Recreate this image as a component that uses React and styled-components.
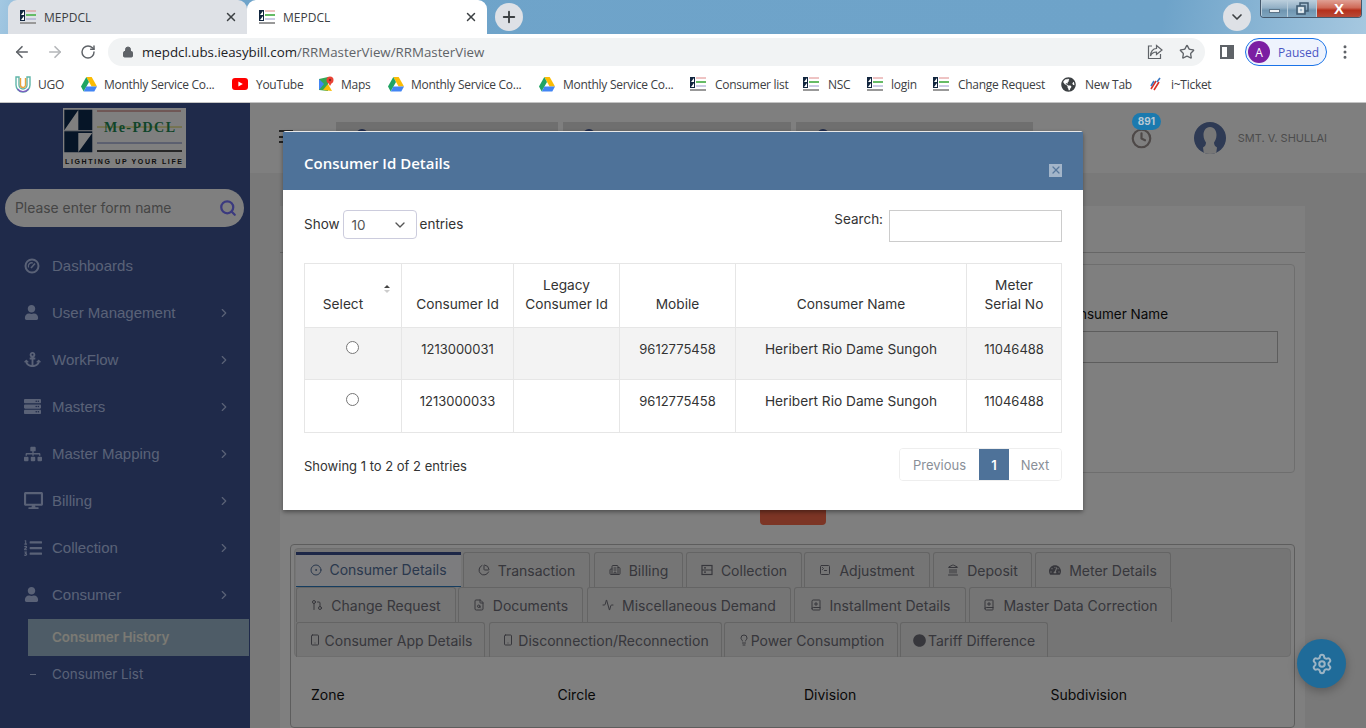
import styled, { createGlobalStyle } from "styled-components";
import {
  ArrowLeft, ArrowRight, RotateCw, Lock, Star, X, Plus, ChevronDown, ChevronRight, MoreVertical, Search as SearchIcon,
  CircleDot, ChartPie, Building2, SquareTerminal, Landmark, GitPullRequest, FileSearch, Activity, BookPlus,
  Smartphone, Lightbulb, Settings, Clock,
} from "lucide-react";
import { FaUser, FaAnchor, FaServer, FaSitemap, FaDesktop, FaListOl, FaGlobeAmericas, FaTachometerAlt, FaCircle } from "react-icons/fa";

const poppins = `Inter, "Noto Sans", sans-serif`;
const segoe = `"Open Sans", "Noto Sans", sans-serif`;

const GlobalStyle = createGlobalStyle`
  html, body { margin: 0; padding: 0; }
  body { font-family: ${poppins}; overflow: hidden; }
  * { box-sizing: border-box; }
`;

const Screen = styled.div`
  width: 1366px;
  height: 728px;
  display: flex;
  flex-direction: column;
  overflow: hidden;
  background: #fff;
`;

/* browser chrome */
const TitleBar = styled.div`
  height: 34px;
  display: flex;
  align-items: flex-end;
  padding-left: 8px;
  position: relative;
  background: linear-gradient(100deg, #a3c8e2 0%, #6fa4ca 6%, #6ea3c9 85%, #a6c8e0 100%);
`;
const BrowserTab = styled.div`
  width: ${(p) => (p.$active ? 240 : 239)}px;
  height: 34px;
  display: flex;
  align-items: center;
  padding: 0 9px 0 12px;
  background: ${(p) => (p.$active ? "#fff" : "#dee1e6")};
  border-radius: 9px 9px 0 0;
  font: 12px ${segoe};
  color: #3c4043;
`;
const TabLabel = styled.span`
  margin-left: 8px;
  flex: 1;
`;
const RoundBtn = styled.div`
  width: 28px;
  height: 28px;
  border-radius: 50%;
  background: #dee1e6;
  display: flex;
  align-items: center;
  justify-content: center;
  color: #3c4043;
  margin: 0 0 3px ${(p) => p.$left}px;
`;
const WindowBtns = styled.div`
  position: absolute;
  top: 0;
  right: 4px;
  width: 102px;
  height: 18px;
  display: flex;
  border: 1px solid #44576b;
  border-top: none;
  border-radius: 0 0 4px 4px;
  overflow: hidden;
`;
const WinBtn = styled.div`
  flex: 0 0 ${(p) => p.$w}px;
  display: flex;
  align-items: center;
  justify-content: center;
  border-left: 1px solid #b9cddb;
  color: #fff;
  font: 900 15px "Liberation Sans", sans-serif;
  background: ${(p) =>
    p.$close
      ? "linear-gradient(#e0a094 0%, #cf6a58 45%, #b5301c 60%, #b84a38 100%)"
      : "linear-gradient(#bccfdd 0%, #93b0c6 45%, #6f95b0 60%, #7fa5bf 100%)"};
`;
const MinDash = styled.span`
  width: 11px;
  height: 4px;
  margin-top: 4px;
  background: #eef2f5;
  border: 1px solid #5c7488;
`;
const Toolbar = styled.div`
  height: 34px;
  display: flex;
  align-items: center;
  padding: 2px 0 0 12px;
  color: #5f6368;
`;
const NavIcon = styled.div`
  width: 20px;
  height: 20px;
  margin-right: 13px;
  display: flex;
  align-items: center;
  justify-content: center;
  color: ${(p) => (p.$off ? "#b4b6b9" : "#5f6368")};
`;
const AddressBar = styled.div`
  width: 1097px;
  height: 28px;
  margin-left: -3px;
  border-radius: 14px;
  background: #f1f3f4;
  display: flex;
  align-items: center;
  padding: 0 10px 0 14px;
  font: 13.3px ${segoe};
  color: #5f6368;
`;
const Host = styled.span`
  color: #202124;
  margin-left: 8px;
`;
const BarActions = styled.div`
  margin-left: auto;
  display: flex;
  gap: 16px;
  align-items: center;
`;
const SidePanelIcon = styled.div`
  width: 14px;
  height: 14px;
  margin-left: 15px;
  border: 2px solid #5f6368;
  border-right-width: 7px;
`;
const ProfileChip = styled.div`
  width: 82px;
  height: 28px;
  margin-left: 11px;
  border: 1px solid #1a73e8;
  border-radius: 14px;
  display: flex;
  align-items: center;
  padding-left: 2px;
  background: #eef3fd;
  font: 12px ${segoe};
  color: #4a55c4;
`;
const ProfileDot = styled.span`
  width: 22px;
  height: 22px;
  border-radius: 50%;
  background: #7b1fa2;
  color: #fff;
  display: flex;
  align-items: center;
  justify-content: center;
  margin-right: 8px;
`;
const MoreBtn = styled.div`
  margin-left: 9px;
  display: flex;
`;
const Bookmarks = styled.div`
  height: 35px;
  display: flex;
  align-items: center;
  padding: 0 0 2px 15px;
  border-bottom: 1px solid #c4c4c4;
  font: 12px ${segoe};
  color: #3c4043;
  letter-spacing: -0.28px;
  white-space: nowrap;
`;
const Bookmark = styled.div`
  width: ${(p) => p.$w}px;
  display: flex;
  align-items: center;
  gap: ${(p) => p.$gap}px;
  flex: none;
`;

/* page */
const Page = styled.div`
  flex: 1;
  min-height: 0;
  display: flex;
  position: relative;
  overflow: hidden;
  background: #f3f3f3;
`;
const Sidebar = styled.aside`
  width: 250px;
  flex: none;
  background: #3e5494;
  display: flex;
  flex-direction: column;
  padding-top: 5px;
`;
const LogoBox = styled.div`
  width: 123px;
  height: 60px;
  margin-left: 63px;
  background: #fff;
`;
const FormSearch = styled.div`
  width: 239px;
  height: 38px;
  margin: 21px 0 0 5px;
  border-radius: 19px;
  background: #fff;
  display: flex;
  align-items: center;
  justify-content: space-between;
  padding: 0 7px 0 10px;
  font: 13.900px ${poppins};
  color: #8a8a8a;
`;
const Menu = styled.nav`
  margin-top: 15px;
  display: flex;
  flex-direction: column;
`;
const MenuItem = styled.div`
  height: 47px;
  display: flex;
  align-items: center;
  padding: 0 19px 0 24px;
  font: 15px "Liberation Sans", sans-serif;
  color: #b4c4ee;
`;
const MenuIcon = styled.span`
  width: 28px;
  display: flex;
  align-items: center;
`;
const MenuLabel = styled.span`
  flex: 1;
`;
const SubItem = styled.div`
  height: ${(p) => (p.$active ? 37 : 36)}px;
  margin: ${(p) => (p.$active ? "1px 1px 0 28px" : "0 1px 0 28px")};
  padding: ${(p) => (p.$active ? "0 0 2px 24px" : "0 0 0 24px")};
  display: flex;
  align-items: center;
  position: relative;
  font: ${(p) => (p.$active ? 600 : 400)} 13.400px ${poppins};
  color: ${(p) => (p.$active ? "#f6f4e8" : "#b4c4ee")};
  background: ${(p) => (p.$active ? "#9db9cf" : "transparent")};
`;
const Dash = styled.span`
  position: absolute;
  left: 2px;
  top: 18px;
  width: 6px;
  height: 1px;
  background: #b4c4ee;
`;

const Main = styled.main`
  flex: 1;
  min-width: 0;
  display: flex;
  flex-direction: column;
`;
const TopHeader = styled.header`
  height: 70px;
  flex: none;
  background: #fff;
  display: flex;
  align-items: flex-start;
  padding: 19px 39px 0 29px;
`;
const Burger = styled.div`
  width: 14px;
  height: 13px;
  margin: 8px 43px 0 0;
  border-top: 2px solid #444;
  border-bottom: 2px solid #444;
  position: relative;
  &::after {
    content: "";
    position: absolute;
    top: 3.5px;
    left: 0;
    right: 0;
    height: 2px;
    background: #444;
  }
`;
const TopBar = styled.div`
  width: ${(p) => p.$w}px;
  height: 32px;
  margin-right: ${(p) => p.$gap}px;
  background: #dedede;
  padding: 7px 0 0 ${(p) => p.$pad}px;
`;
const BarMark = styled.span`
  display: block;
  width: 12px;
  height: 12px;
  border: 2px solid #3e5494;
  border-radius: 50%;
`;
const TopRight = styled.div`
  margin-left: auto;
  display: flex;
  align-items: center;
  height: 32px;
`;
const ClockWrap = styled.div`
  position: relative;
  color: #9c9290;
  display: flex;
  margin-right: 42px;
`;
const Badge = styled.span`
  position: absolute;
  top: -15px;
  left: 1px;
  width: 29px;
  height: 17px;
  border-radius: 9px;
  background: #1b7aaf;
  color: #b8c8d4;
  display: flex;
  align-items: center;
  justify-content: center;
  font: 700 10px ${poppins};
  z-index: 3;
`;
const UserName = styled.span`
  margin-left: 12px;
  font: 11px ${poppins};
  color: #999;
`;

const Content = styled.div`
  flex: 1;
  min-height: 0;
  padding: 33px 61px 0 30px;
`;
const Card = styled.section`
  background: #fff;
  height: 100%;
  display: flex;
  flex-direction: column;
  align-items: stretch;
`;
const CardHead = styled.div`
  height: 47px;
  flex: none;
  border-bottom: 1px solid #ccc;
`;
const FormPanel = styled.div`
  height: 209px;
  margin: 11px 10px 0;
  border: 1px solid #ddd;
  border-radius: 4px;
  padding: 41px 16px 0 0;
  display: flex;
  justify-content: flex-end;
  flex: none;
`;
const Field = styled.div`
  width: 217px;
  font: 13.500px ${poppins};
  color: #111;
`;
const FieldInput = styled.div`
  height: 32px;
  margin-top: 9px;
  border: 1px solid #bbb;
`;
const SubmitBtn = styled.div`
  width: 66px;
  height: 34px;
  margin: 18px auto 0;
  border-radius: 4px;
  background: #f86a4a;
  flex: none;
`;
const DetailPanel = styled.div`
  margin: 19px 10px 0;
  padding: 3px;
  border: 1px solid #bbb;
  border-radius: 4px;
  flex: 1;
`;
const TabStrip = styled.div`
  height: 109px;
  padding: 3px 0 0 1px;
  background: #eaeaea;
  border: 1px solid #ddd;
  border-radius: 4px;
  display: flex;
  flex-wrap: wrap;
  align-content: flex-start;
  font: 14px ${poppins};
  color: #6e6e78;
`;
const TabItem = styled.div`
  width: ${(p) => p.$w}px;
  margin-right: ${(p) => p.$gap}px;
  height: 35px;
  display: flex;
  align-items: center;
  justify-content: center;
  gap: ${(p) => p.$iconGap}px;
  border: 1px solid #c8c8c8;
  border-bottom: none;
  border-radius: 3px 3px 0 0;
  white-space: nowrap;
  background: ${(p) => (p.$active ? "#f8f8fc" : "transparent")};
  ${(p) => p.$active && "border: none; border-top: 3px solid #3a4f8f; border-bottom: 1px solid #2a7ac0; color: #54709a; border-radius: 0; padding-bottom: 2px;"}
`;
const FieldRow = styled.div`
  display: grid;
  grid-template-columns: repeat(4, 246.5px);
  padding: 29px 0 0 17px;
  font: 14px ${poppins};
  color: #111;
`;

const Fab = styled.div`
  position: absolute;
  right: 20px;
  bottom: 40px;
  width: 49px;
  height: 49px;
  border-radius: 50%;
  background: #1f6b99;
  color: #9cb4c4;
  display: flex;
  align-items: center;
  justify-content: center;
  box-shadow: 0 3px 10px rgba(0, 0, 0, 0.25);
  z-index: 3;
`;

/* modal */
const Overlay = styled.div`
  position: absolute;
  inset: 0;
  background: rgba(0, 0, 0, 0.5);
  display: flex;
  justify-content: center;
  align-items: flex-start;
  padding-top: 28px;
  z-index: 2;
`;
const Modal = styled.div`
  width: 800px;
  background: #fff;
  border-radius: 3px 3px 0 0;
  box-shadow: 0 2px 4px rgba(0, 0, 0, 0.4);
  border-top: 1px solid #e8e8e8;
`;
const ModalHead = styled.div`
  height: 58px;
  background: #4e7299;
  padding: 3px 21px 0 21px;
  display: flex;
  align-items: center;
  justify-content: space-between;
  color: #fff;
  font: 600 15px ${segoe};
`;
const CloseBox = styled.div`
  width: 13px;
  height: 13px;
  margin: 15px 0 0 0;
  background: #a3b5c9;
  color: #58789c;
  display: flex;
  align-items: center;
  justify-content: center;
`;
const ModalBody = styled.div`
  padding: 20px 21px 29px;
  font: 13.500px ${poppins};
  color: #333;
`;
const Controls = styled.div`
  display: flex;
  justify-content: space-between;
  align-items: flex-start;
  height: 53px;
`;
const ShowEntries = styled.div`
  display: flex;
  align-items: center;
  gap: 3px;
  margin-top: -1px;
`;
const SelectBox = styled.div`
  width: 74px;
  height: 29px;
  border: 1px solid #ccd;
  border-radius: 4px;
  padding: 0 8px;
  margin: 1px 0 0 0;
  display: flex;
  align-items: center;
  justify-content: space-between;
  color: #555;
`;
const SearchWrap = styled.label`
  display: flex;
  gap: 6px;
  align-items: flex-start;
  line-height: 18px;
`;
const SearchInput = styled.input`
  width: 173px;
  height: 32px;
  border: 1px solid #ccc;
  outline: none;
`;
const Table = styled.table`
  width: 757px;
  border-collapse: collapse;
  table-layout: fixed;
  text-align: center;
`;
const Th = styled.th`
  border: 1px solid #e6e6e6;
  height: 64px;
  padding: 0 ${(p) => (p.$sorted ? 24 : 4)}px 13px 4px;
  font: 400 13.700px/19px ${poppins};
  vertical-align: bottom;
  position: relative;
  width: ${(p) => p.$w}px;
`;
const Row = styled.tr`
  height: ${(p) => p.$h}px;
  background: ${(p) => (p.$odd ? "#f3f3f3" : "#fff")};
`;
const Td = styled.td`
  border: 1px solid #e6e6e6;
  padding: 12px ${(p) => (p.$radio ? 6 : 4)}px 0 4px;
  vertical-align: top;
  font-size: ${(p) => (p.$wide ? 13.7 : 13)}px;
  line-height: 18px;
`;
const Radio = styled.input`
  margin: 0;
  width: 13px;
  height: 13px;
`;
const SortMark = styled.svg`
  position: absolute;
  right: 11px;
  top: 20px;
`;
const TableFoot = styled.div`
  display: flex;
  justify-content: space-between;
  align-items: center;
  margin-top: 15px;
  font-size: 13px;
`;
const FootInfo = styled.span`
  padding-top: 2px;
`;
const Pager = styled.div`
  display: flex;
  height: 33px;
  border: 1px solid #eee;
  border-radius: 4px;
  overflow: hidden;
  color: #8a8f98;
`;
const PageBtn = styled.div`
  width: ${(p) => p.$w}px;
  display: flex;
  align-items: center;
  justify-content: center;
  font-weight: ${(p) => (p.$current ? 600 : 400)};
  background: ${(p) => (p.$current ? "#4e7299" : "#fff")};
  color: ${(p) => (p.$current ? "#fff" : "inherit")};
`;

const Favicon = () => (
  <svg width="16" height="16" viewBox="0 0 16 16">
    <rect x="0" y="1" width="5" height="11" fill="#12263f" />
    <path d="M1 6l3-4v4zM1 11l3-4v4z" fill="#fff" />
    <path d="M6 2h10" stroke="#d88" />
    <path d="M6 6h10" stroke="#6b6" strokeWidth="2" />
    <path d="M6 10h10" stroke="#99c" />
    <path d="M0 14h16" stroke="#999" strokeWidth="2" />
  </svg>
);
const Drive = () => (
  <svg width="16" height="15" viewBox="0 0 16 15">
    <path d="M5.3 0h5.4l5.3 9.5h-5.4z" fill="#fbbc04" />
    <path d="M5.3 0L0 9.5 2.7 14.5 8 5z" fill="#1fa463" />
    <path d="M2.7 14.5h10.6L16 9.5H5.4z" fill="#4285f4" />
  </svg>
);
const YouTube = () => (
  <svg width="16" height="12" viewBox="0 0 16 12">
    <rect width="16" height="12" rx="3" fill="#f00" />
    <path d="M6.4 3.4L10.8 6l-4.4 2.6z" fill="#fff" />
  </svg>
);
const Maps = () => (
  <svg width="16" height="16" viewBox="0 0 16 16">
    <path d="M1 3l9-2v14l-9-1z" fill="#34a853" />
    <path d="M1 3l5 5-5 6z" fill="#4285f4" />
    <path d="M5 14l5-6 4 7z" fill="#fbbc04" />
    <circle cx="12" cy="4" r="3.5" fill="#ea4335" />
    <path d="M9.5 5.5L12 10l2.5-4.5z" fill="#ea4335" />
    <circle cx="12" cy="4" r="1.2" fill="#8c2a20" />
  </svg>
);
const Ugo = () => (
  <svg width="16" height="17" viewBox="0 0 16 17" fill="none" strokeWidth="1.4">
    <path d="M1 1h3v8a4 4 0 0 0 8 0V1h3v8a7 7 0 0 1-14 0z" stroke="#5fb5a8" />
    <path d="M5.5 2v7a2.5 2.5 0 0 0 5 0V2" stroke="#e8a33d" />
    <path d="M2.5 13a7 7 0 0 0 11 0" stroke="#7a5fc0" />
  </svg>
);
const TicketIcon = () => (
  <svg width="16" height="16" viewBox="0 0 16 16" fill="none" strokeWidth="1.6">
    <path d="M4 13l5-8M7 14l5-8" stroke="#d8312a" />
    <path d="M10 6l3-4M4 10l3-5" stroke="#3a78c2" />
  </svg>
);
const ShareBox = () => (
  <svg width="16" height="16" viewBox="0 0 16 16" fill="none" stroke="#5f6368" strokeWidth="1.2">
    <path d="M5 2H1.5v12.5h12V10" />
    <path d="M9.5 1.5L15 6l-5.5 4.5V8C6.5 8 4.5 9.5 3.5 12c0-4.500 2.500-7.500 6-7.500z" />
  </svg>
);
const RestoreIcon = () => (
  <svg width="13" height="13" viewBox="0 0 13 13" fill="none" stroke="#eef2f5" strokeWidth="1.5">
    <rect x="4" y="1" width="8" height="8" stroke="#3f5a70" />
    <rect x="1" y="4" width="8" height="8" fill="#9db8cb" stroke="#3f5a70" />
    <rect x="3" y="6" width="4" height="4" />
  </svg>
);
const CollectionIcon = ({ size }) => (
  <svg width={size} height={size} viewBox="0 0 12 12" fill="none" stroke="currentColor" strokeWidth="1.2">
    <rect x="1" y="1.500" width="10" height="9" />
    <path d="M1 6h10M3 3.800h2M3 8.200h2" />
  </svg>
);
const DashGauge = ({ size }) => (
  <svg width={size} height={size} viewBox="0 0 16 16" fill="none" stroke="currentColor">
    <circle cx="8" cy="8" r="6.500" strokeWidth="2" />
    <path d="M4.500 9.500a3.500 3.500 0 0 1 4.500-4.500" strokeWidth="1.300" />
    <path d="M7 10l4-4.500" strokeWidth="1.600" />
  </svg>
);
const Logo = () => (
  <LogoBox>
    <svg width="123" height="60" viewBox="0 0 123 60">
      <path d="M1.300 1.700h28v20.600h-28zM1.300 23.300h28v21h-28z" fill="#0d2a4e" />
      <path d="M15.300 2L1.300 22.300h14zM29.300 25L15.300 44.300V25z" fill="#fff" />
      <path d="M34 3h84" stroke="#c0605a" />
      <path d="M34 19h85" stroke="#d8d04a" />
      <text x="41" y="24" fontFamily="Liberation Serif, serif" fontWeight="700" fontSize="14" textLength="71" fill="#1f8a55">Me-PDCL</text>
      <path d="M34 35h85" stroke="#7080c0" />
      <path d="M34 43h85" stroke="#111" strokeWidth="1.5" />
      <text x="2" y="56" fontFamily="Liberation Sans, sans-serif" fontSize="7" fontWeight="700" textLength="117" fill="#222">LIGHTING UP YOUR LIFE</text>
    </svg>
  </LogoBox>
);
const Avatar = () => (
  <svg width="32" height="32" viewBox="0 0 32 32">
    <clipPath id="av"><circle cx="16" cy="16" r="16" /></clipPath>
    <g clipPath="url(#av)">
      <rect width="32" height="32" fill="#5d75a8" />
      <path d="M16 5c-4.500 0-6.500 4-6.500 8 0 3.500 1.500 6 2.500 7.500 0 2-1 4-3 5l1 7h12l1-7c-2-1-3-3-3-5 1-1.500 2.500-4 2.500-7.500 0-4-2-8-6.500-8z" fill="#eee" />
    </g>
  </svg>
);

const bookmarks = [
  [Ugo, "UGO", 66, 7],
  [Drive, "Monthly Service Co...", 151, 7],
  [YouTube, "YouTube", 86, 8],
  [Maps, "Maps", 70, 7],
  [Drive, "Monthly Service Co...", 151, 7],
  [Drive, "Monthly Service Co...", 151, 8],
  [Favicon, "Consumer list", 113, 9],
  [Favicon, "NSC", 64, 9],
  [Favicon, "login", 66, 8],
  [Favicon, "Change Request", 128, 9],
  [FaGlobeAmericas, "New Tab", 86, 9],
  [TicketIcon, "i~Ticket", 70, 8],
];

const menu = [
  [DashGauge, "Dashboards", false, 16],
  [FaUser, "User Management", true, 15],
  [FaAnchor, "WorkFlow", true, 17],
  [FaServer, "Masters", true, 17],
  [FaSitemap, "Master Mapping", true, 18],
  [FaDesktop, "Billing", true, 19],
  [FaListOl, "Collection", true, 18],
  [FaUser, "Consumer", true, 15],
];

const tabs = [
  [CircleDot, "Consumer Details", 165, 2, 7, true],
  [ChartPie, "Transaction", 127, 4, 8],
  [Building2, "Billing", 89, 3, 8],
  [CollectionIcon, "Collection", 116, 2, 8],
  [SquareTerminal, "Adjustment", 126, 3, 8],
  [Landmark, "Deposit", 99, 3, 8],
  [FaTachometerAlt, "Meter Details", 136, 60, 8],
  [GitPullRequest, "Change Request", 160, 2, 8],
  [FileSearch, "Documents", 125, 4, 8],
  [Activity, "Miscellaneous Demand", 204, 3, 8],
  [BookPlus, "Installment Details", 172, 3, 8],
  [BookPlus, "Master Data Correction", 203, 60, 8],
  [Smartphone, "Consumer App Details", 189, 4, 4],
  [Smartphone, "Disconnection/Reconnection", 233, 2, 4],
  [Lightbulb, "Power Consumption", 174, 2, 1],
  [FaCircle, "Tariff Difference", 148, 100, 2],
];

const columns = [
  [["Select"], 97],
  [["Consumer Id"], 112],
  [["Legacy", "Consumer Id"], 106],
  [["Mobile"], 116],
  [["Consumer Name"], 231],
  [["Meter", "Serial No"], 95],
];

const rows = [
  ["1213000031", "", "9612775458", "Heribert Rio Dame Sungoh", "11046488"],
  ["1213000033", "", "9612775458", "Heribert Rio Dame Sungoh", "11046488"],
];

const App = () => (
  <Screen>
    <GlobalStyle />
    <TitleBar>
      <BrowserTab>
        <Favicon />
        <TabLabel>MEPDCL</TabLabel>
        <X size={14} strokeWidth={2.5} />
      </BrowserTab>
      <BrowserTab $active>
        <Favicon />
        <TabLabel>MEPDCL</TabLabel>
        <X size={14} strokeWidth={2.5} />
      </BrowserTab>
      <RoundBtn $left={8}><Plus size={18} strokeWidth={2.5} /></RoundBtn>
      <RoundBtn $left={700}><ChevronDown size={16} strokeWidth={2.5} /></RoundBtn>
      <WindowBtns>
        <WinBtn $w={26}><MinDash /></WinBtn>
        <WinBtn $w={29}><RestoreIcon /></WinBtn>
        <WinBtn $w={45} $close>X</WinBtn>
      </WindowBtns>
    </TitleBar>
    <Toolbar>
      <NavIcon><ArrowLeft size={18} strokeWidth={2.2} /></NavIcon>
      <NavIcon $off><ArrowRight size={18} strokeWidth={2.2} /></NavIcon>
      <NavIcon><RotateCw size={16} strokeWidth={2.2} /></NavIcon>
      <AddressBar>
        <Lock size={12} fill="#5f6368" />
        <Host>mepdcl.ubs.ieasybill.com</Host>/RRMasterView/RRMasterView
        <BarActions>
          <ShareBox />
          <Star size={16} />
        </BarActions>
      </AddressBar>
      <SidePanelIcon />
      <ProfileChip>
        <ProfileDot>A</ProfileDot>Paused
      </ProfileChip>
      <MoreBtn><MoreVertical size={18} /></MoreBtn>
    </Toolbar>
    <Bookmarks>
      {bookmarks.map(([Icon, label, w, gap], i) => (
        <Bookmark key={i} $w={w} $gap={gap}>
          <Icon size={15} />
          {label}
        </Bookmark>
      ))}
    </Bookmarks>

    <Page>
      <Sidebar>
        <Logo />
        <FormSearch>
          Please enter form name
          <SearchIcon size={18} color="#7674ff" strokeWidth={3} />
        </FormSearch>
        <Menu>
          {menu.map(([Icon, label, more, size]) => (
            <MenuItem key={label}>
              <MenuIcon><Icon size={size} /></MenuIcon>
              <MenuLabel>{label}</MenuLabel>
              {more && <ChevronRight size={14} />}
            </MenuItem>
          ))}
        </Menu>
        <SubItem $active>Consumer History</SubItem>
        <SubItem><Dash />Consumer List</SubItem>
      </Sidebar>
      <Main>
        <TopHeader>
          <Burger />
          <TopBar $w={222} $gap={5} $pad={20}><BarMark /></TopBar>
          <TopBar $w={228} $gap={5} $pad={20}><BarMark /></TopBar>
          <TopBar $w={237} $gap={0} $pad={21}><BarMark /></TopBar>
          <TopRight>
            <ClockWrap>
              <Clock size={21} strokeWidth={2.500} />
              <Badge>891</Badge>
            </ClockWrap>
            <Avatar />
            <UserName>SMT. V. SHULLAI</UserName>
          </TopRight>
        </TopHeader>
        <Content>
          <Card>
            <CardHead />
            <FormPanel>
              <Field>
                Consumer Name
                <FieldInput />
              </Field>
            </FormPanel>
            <SubmitBtn />
            <DetailPanel>
              <TabStrip>
                {tabs.map(([Icon, label, w, gap, iconGap, active]) => (
                  <TabItem key={label} $w={w} $gap={gap} $iconGap={iconGap} $active={active}>
                    <Icon size={Icon === FaCircle ? 13 : 12} />
                    {label}
                  </TabItem>
                ))}
              </TabStrip>
              <FieldRow>
                <span>Zone</span>
                <span>Circle</span>
                <span>Division</span>
                <span>Subdivision</span>
              </FieldRow>
            </DetailPanel>
          </Card>
        </Content>
      </Main>
      <Overlay>
        <Modal>
          <ModalHead>
            Consumer Id Details
            <CloseBox><X size={12} strokeWidth={2.5} /></CloseBox>
          </ModalHead>
          <ModalBody>
            <Controls>
              <ShowEntries>
                Show
                <SelectBox>10<ChevronDown size={16} /></SelectBox>
                entries
              </ShowEntries>
              <SearchWrap>
                Search:
                <SearchInput />
              </SearchWrap>
            </Controls>
            <Table>
              <thead>
                <tr>
                  {columns.map(([lines, w], i) => (
                    <Th key={lines.join()} $w={w} $sorted={i === 0}>
                      {lines.map((line) => (
                        <div key={line}>{line}</div>
                      ))}
                      {i === 0 && (
                        <SortMark width="6" height="10" viewBox="0 0 6 10">
                          <path d="M0 4l3-3 3 3z" fill="#444" />
                          <path d="M0 6l3 3 3-3z" fill="#ccc" />
                        </SortMark>
                      )}
                    </Th>
                  ))}
                </tr>
              </thead>
              <tbody>
                {rows.map((cells, r) => (
                  <Row key={cells[0]} $odd={r === 0} $h={r === 0 ? 52 : 53}>
                    <Td $radio><Radio type="radio" name="consumer" /></Td>
                    {cells.map((c, i) => (
                      <Td key={i} $wide={i === 3}>{c}</Td>
                    ))}
                  </Row>
                ))}
              </tbody>
            </Table>
            <TableFoot>
              <FootInfo>Showing 1 to 2 of 2 entries</FootInfo>
              <Pager>
                <PageBtn $w={79}>Previous</PageBtn>
                <PageBtn $w={30} $current>1</PageBtn>
                <PageBtn $w={52}>Next</PageBtn>
              </Pager>
            </TableFoot>
          </ModalBody>
        </Modal>
      </Overlay>
      <Fab><Settings size={22} strokeWidth={2.200} /></Fab>
    </Page>
  </Screen>
);

export default App;
